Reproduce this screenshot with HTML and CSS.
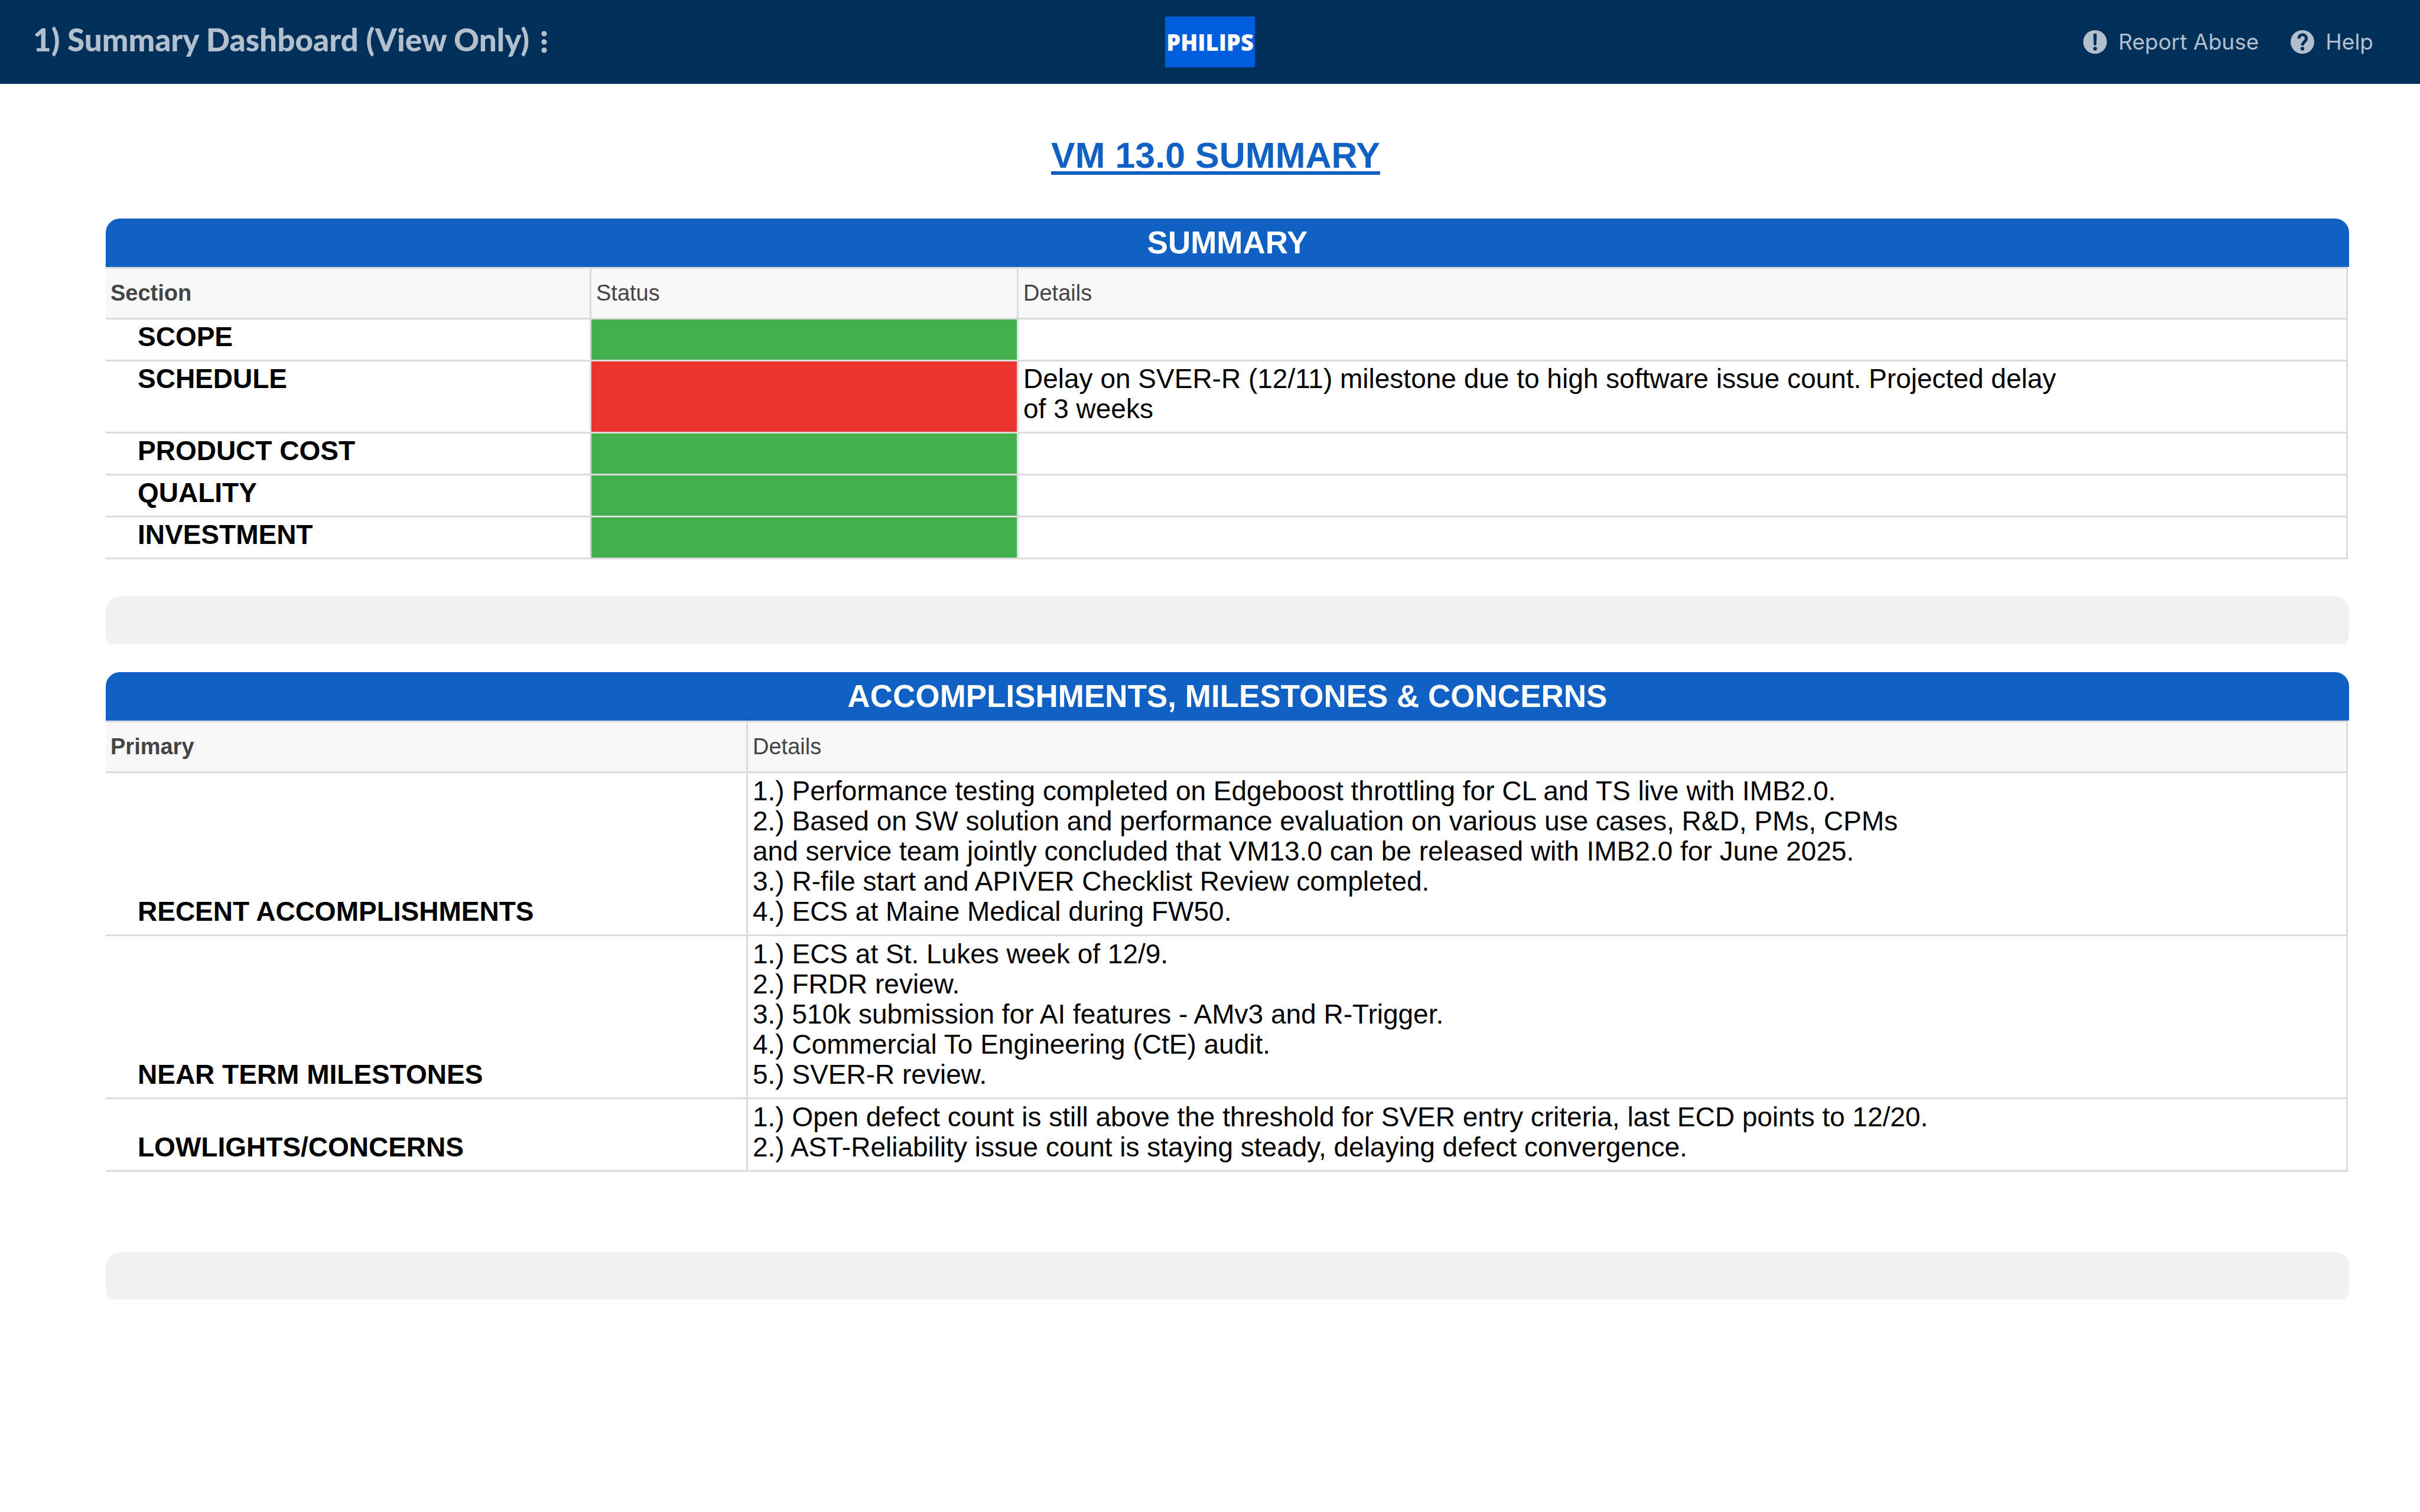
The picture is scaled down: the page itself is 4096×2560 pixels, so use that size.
FILE: index.html
```html
<!DOCTYPE html>
<html lang="en">
<head>
<meta charset="utf-8">
<title>1) Summary Dashboard (View Only)</title>
<link rel="stylesheet" href="styles.css">
</head>
<body>
<header class="topbar">
  <div class="topbar-left">
    <h1 class="topbar-title">1) Summary Dashboard (View Only)</h1>
    <button class="menu-button" type="button" aria-label="Dashboard menu">
      <svg class="menu-icon" viewBox="0 0 10 40" aria-hidden="true"><circle cx="5" cy="6" r="4.6"/><circle cx="5" cy="20" r="4.6"/><circle cx="5" cy="34" r="4.6"/></svg>
    </button>
  </div>
  <div class="logo">PHILIPS</div>
  <nav class="topbar-links">
    <a class="topbar-link" href="#report">
      <svg class="link-icon" viewBox="0 0 14 14" aria-hidden="true"><circle cx="7" cy="7" r="7" fill="#b2c0cd"/><path d="M6 2.9a1 1 0 0 1 2 0l-.2 5.5a.8.8 0 0 1-1.6 0z" fill="#003059"/><circle cx="7" cy="11" r="1.1" fill="#003059"/></svg>
      Report Abuse</a>
    <a class="topbar-link" href="#help">
      <svg class="link-icon" viewBox="0 0 14 14" aria-hidden="true"><circle cx="7" cy="7" r="7" fill="#b2c0cd"/><path d="M4.9 5C4.9 3.6 5.8 2.7 7.1 2.7S9.3 3.6 9.3 5C9.3 6.8 7 7 7 9.1" fill="none" stroke="#003059" stroke-width="1.8"/><circle cx="7" cy="11" r="1.1" fill="#003059"/></svg>
      Help</a>
  </nav>
</header>
<main class="board">
  <h2 class="board-title"><a class="board-link" href="#vm13">VM 13.0 SUMMARY</a></h2>

  <section class="panel">
    <h3 class="panel-title">SUMMARY</h3>
    <table class="grid summary">
      <colgroup><col class="col-section"><col class="col-status"><col></colgroup>
      <thead><tr><th class="primary" scope="col">Section</th><th scope="col">Status</th><th scope="col">Details</th></tr></thead>
      <tbody>
        <tr><th scope="row">SCOPE</th><td class="green"></td><td></td></tr>
        <tr><th scope="row">SCHEDULE</th><td class="red"></td><td>Delay on SVER-R (12/11) milestone due to high software issue count. Projected delay<br>of 3 weeks</td></tr>
        <tr><th scope="row">PRODUCT COST</th><td class="green"></td><td></td></tr>
        <tr><th scope="row">QUALITY</th><td class="green"></td><td></td></tr>
        <tr><th scope="row">INVESTMENT</th><td class="green"></td><td></td></tr>
      </tbody>
    </table>
  </section>

  <div class="divider divider-upper"></div>

  <section class="panel">
    <h3 class="panel-title">ACCOMPLISHMENTS, MILESTONES &amp; CONCERNS</h3>
    <table class="grid notes">
      <colgroup><col class="col-primary"><col></colgroup>
      <thead><tr><th class="primary" scope="col">Primary</th><th scope="col">Details</th></tr></thead>
      <tbody>
        <tr><th scope="row">RECENT ACCOMPLISHMENTS</th><td>1.) Performance testing completed on Edgeboost throttling for CL and TS live with IMB2.0.<br>2.) Based on SW solution and performance evaluation on various use cases, R&amp;D, PMs, CPMs<br>and service team jointly concluded that VM13.0 can be released with IMB2.0 for June 2025.<br>3.) R-file start and APIVER Checklist Review completed.<br>4.) ECS at Maine Medical during FW50.</td></tr>
        <tr><th scope="row">NEAR TERM MILESTONES</th><td>1.) ECS at St. Lukes week of 12/9.<br>2.) FRDR review.<br>3.) 510k submission for AI features - AMv3 and R-Trigger.<br>4.) Commercial To Engineering (CtE) audit.<br>5.) SVER-R review.</td></tr>
        <tr><th scope="row">LOWLIGHTS/CONCERNS</th><td>1.) Open defect count is still above the threshold for SVER entry criteria, last ECD points to 12/20.<br>2.) AST-Reliability issue count is staying steady, delaying defect convergence.</td></tr>
      </tbody>
    </table>
  </section>

  <div class="divider divider-lower"></div>
</main>
</body>
</html>
```

FILE: styles.css
```css
* {
  box-sizing: border-box;
}

body {
  margin: 0;
  background: #fff;
  color: #000;
  font-family: "Liberation Sans", Arial, sans-serif;
}

/* Top bar */
.topbar {
  display: grid;
  grid-template-columns: 1fr auto 1fr;
  align-items: center;
  height: 142px;
  padding: 0 56px;
  background: #003059;
  color: #b2c0cd;
}

.topbar-left {
  display: flex;
  align-items: center;
  gap: 20px;
}

.topbar-title {
  margin: 0;
  padding-bottom: 8px;
  font: 900 53px/60px Lato, sans-serif;
}

.menu-button {
  display: flex;
  padding: 0;
  border: 0;
  background: none;
}

.menu-icon {
  width: 10px;
  height: 40px;
  fill: #b2c0cd;
}

.logo {
  width: 152px;
  background: #005edc;
  color: #fff;
  font: 800 38px/86px "Open Sans", sans-serif;
  text-align: center;
}

.topbar-links {
  display: flex;
  justify-content: flex-end;
  gap: 54px;
  padding-right: 23px;
}

.topbar-link {
  display: flex;
  align-items: center;
  gap: 19px;
  color: #b2c0cd;
  font: 400 37px/44px Inter, sans-serif;
  text-decoration: none;
}

.link-icon {
  width: 40px;
  height: 40px;
}

/* Board */
.board {
  padding: 86px 120px 0 179px;
}

.board-title {
  margin: 0 0 72px -40px;
  font-size: 61px;
  line-height: 70px;
  text-align: center;
}

.board-link {
  color: #1161c4;
  text-decoration: underline;
  text-decoration-thickness: 6px;
  text-underline-offset: 6px;
}

.panel-title {
  margin: 0;
  border-radius: 24px 24px 0 0;
  background: #1161c4;
  color: #fff;
  font-size: 53px;
  line-height: 82px;
  text-align: center;
}

.grid {
  width: calc(100% - 2px);
  border-collapse: separate;
  border-spacing: 0;
  border-top: 3px solid #dcdcdc;
  table-layout: fixed;
  font-size: 46px;
  line-height: 51px;
}

.grid th,
.grid td {
  padding: 4px 8px 13px;
  border-right: 3px solid #dcdcdc;
  border-bottom: 3px solid #dcdcdc;
  text-align: left;
  vertical-align: top;
}

.grid tbody th {
  height: 71px;
  padding-left: 54px;
}

.grid thead th {
  padding: 16px 8px;
  background: #f8f8f8;
  color: #444;
  font-size: 38px;
  font-weight: 400;
}

.grid thead .primary {
  font-weight: 700;
}

.notes tbody th,
.notes tbody td {
  padding-top: 5px;
}

.notes tbody th {
  vertical-align: bottom;
}

.col-section {
  width: 822px;
}

.col-status {
  width: 723px;
}

.col-primary {
  width: 1087px;
}

.green {
  background: #42b14c;
}

.red {
  background: #ea352e;
}

/* The rounded bar is taller than its slot, so its lower corners are cut */
.divider {
  height: 80px;
  overflow: hidden;
}

.divider::before {
  content: "";
  display: block;
  height: 88px;
  border-radius: 24px;
  background: #f1f1f1;
}

.divider-upper {
  margin: 63px 0 48px;
}

.divider-lower {
  margin-top: 136px;
}
```
